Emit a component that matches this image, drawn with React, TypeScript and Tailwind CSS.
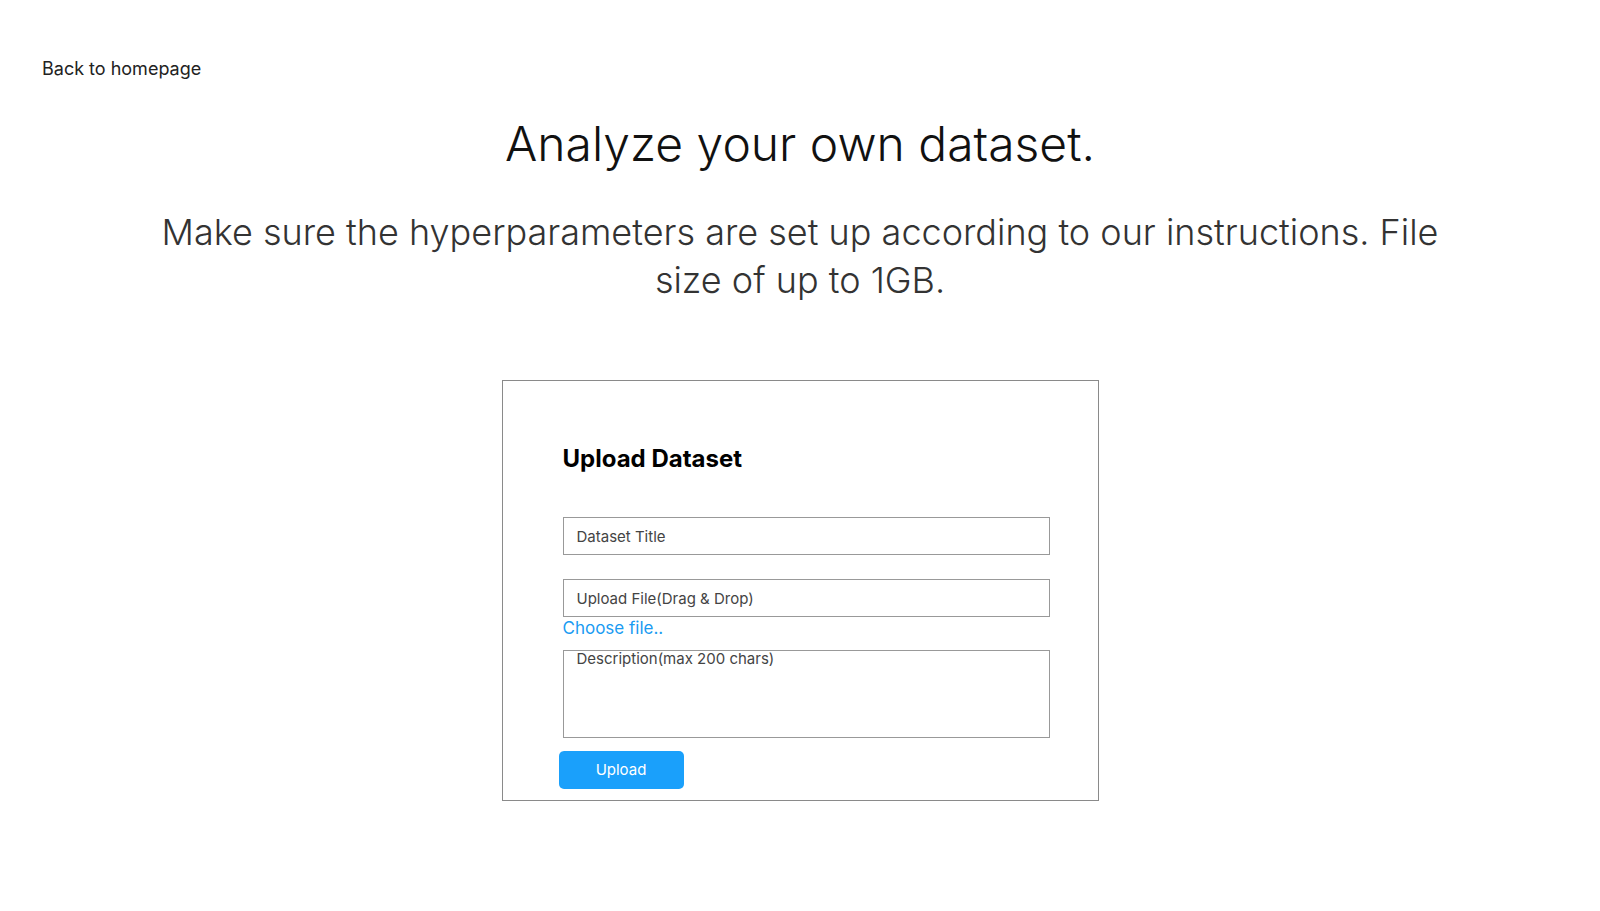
import React from "react";

export default function App() {
  return (
    <div className="min-h-screen bg-white text-black" style={{ fontFamily: '"Inter", "Open Sans", sans-serif' }}>
      <div className="pt-[55px] pl-[42px]">
        <a href="#" className="text-[18px] leading-[28px] text-[#222]">Back to homepage</a>
      </div>
      <h1 className="mt-[31px] text-center text-[48px] leading-[60px] font-light text-[#111]">
        Analyze your own dataset.
      </h1>
      <p className="mt-[34px] text-center text-[36px] leading-[48px] font-light text-[#333]">
        Make sure the hyperparameters are set up according to our instructions. File
        <br />
        size of up to 1GB.
      </p>
      <div className="mt-[76px] mx-auto w-[597px] border border-[#8a8a8a] pt-[62px] pb-[11px] pl-[60px]">
        <h2 className="text-[24px] leading-[32px] font-bold text-black">Upload Dataset</h2>
        <input
          type="text"
          placeholder="Dataset Title"
          className="mt-[42px] block w-[487px] h-[38px] border border-[#999] px-[13px] text-[15px] text-[#444] placeholder:text-[#444] outline-none"
        />
        <input
          type="text"
          placeholder="Upload File(Drag & Drop)"
          className="mt-[24px] block w-[487px] h-[38px] border border-[#999] px-[13px] text-[15px] text-[#444] placeholder:text-[#444] outline-none"
        />
        <a href="#" className="block text-[17px] leading-[22px] text-[#1a9bf2]">Choose file..</a>
        <textarea
          placeholder="Description(max 200 chars)"
          className="mt-[11px] block w-[487px] h-[88px] border border-[#999] px-[13px] py-0 text-[15px] leading-[16px] text-[#444] placeholder:text-[#444] outline-none resize-none"
        />
        <button className="mt-[13px] -ml-[4px] block w-[125px] h-[38px] rounded-[5px] bg-[#1aa0fb] text-white text-[15px]">
          Upload
        </button>
      </div>
    </div>
  );
}
